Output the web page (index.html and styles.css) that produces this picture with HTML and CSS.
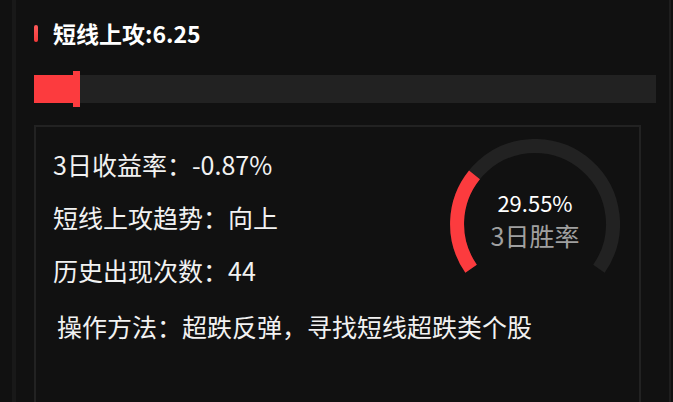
FILE: index.html
```html
<!DOCTYPE html>
<html lang="zh-CN">
<head>
    <meta charset="UTF-8">
    <title>短线上攻</title>
    <link rel="stylesheet" href="styles.css">
</head>
<body>
    <div class="panel">
        <div class="title">
            <span class="marker"></span>
            <span class="title-text">短线上攻:6.25</span>
        </div>
        <div class="bar">
            <div class="bar-fill" style="width: 7.4%;">
                <span class="bar-tick"></span>
            </div>
        </div>
        <div class="card">
            <div class="card-row">
                <div class="stats">
                    <div class="stat">3日收益率：-0.87%</div>
                    <div class="stat">短线上攻趋势：向上</div>
                    <div class="stat">历史出现次数：44</div>
                </div>
                <div class="gauge">
                    <svg width="170" height="170" viewBox="0 0 170 170">
                        <!-- 250 degree arc, gap at the bottom -->
                        <path class="gauge-track" d="M 21.1 129.7 A 78 78 0 1 1 148.9 129.7" />
                        <path class="gauge-value" d="M 21.1 129.7 A 78 78 0 0 1 24.5 35.9" />
                    </svg>
                    <div class="gauge-label">
                        <div class="gauge-num">29.55%</div>
                        <div class="gauge-name">3日胜率</div>
                    </div>
                </div>
            </div>
            <div class="method">操作方法：超跌反弹，寻找短线超跌类个股</div>
        </div>
    </div>
</body>
</html>
```

FILE: styles.css
```css
body {
    margin: 0;
    padding: 0;
    background-color: #111;
    color: #f2f2f2;
    font-family: "Noto Sans CJK SC", "Noto Sans", sans-serif;
    height: 402px;
    overflow: hidden;
}
.panel {
    margin-left: 12px;
    width: 659px;
    height: 402px;
    border-left: 4px solid #191919;
    border-right: 2px solid #1e1e1e;
    padding: 18px 13px 0 18px;
    box-sizing: border-box;
    overflow: hidden;
}
.title {
    display: flex;
    align-items: center;
    height: 30px;
}
.marker {
    width: 4px;
    height: 17px;
    border-radius: 2px;
    background: linear-gradient(#ff5a5a, #f53a3a);
    margin-right: 15px;
}
.title-text {
    font-size: 23px;
    font-weight: bold;
    color: #fff;
}
.bar {
    margin-top: 27px;
    height: 28px;
    background-color: #222;
}
.bar-fill {
    position: relative;
    height: 100%;
    background-color: #fc3b3e;
}
.bar-tick {
    position: absolute;
    right: 0;
    top: -4px;
    width: 7px;
    height: 36px;
    background-color: #fc3b3e;
}
.card {
    margin-top: 22px;
    width: 607px;
    height: 300px;
    border: 2px solid #222;
    box-sizing: border-box;
    padding: 12px 19px 0 17px;
}
.card-row {
    display: flex;
    justify-content: space-between;
}
.stats {
    margin-top: -1px;
}
.stat {
    font-size: 25px;
    line-height: 53px;
}
.gauge {
    position: relative;
    width: 170px;
    height: 170px;
}
.gauge svg {
    display: block;
}
.gauge-track {
    fill: none;
    stroke: #222;
    stroke-width: 14;
}
.gauge-value {
    fill: none;
    stroke: #fc3b3e;
    stroke-width: 14;
}
.gauge-label {
    position: absolute;
    left: 0;
    top: 0;
    width: 100%;
    height: 100%;
    display: flex;
    flex-direction: column;
    align-items: center;
    justify-content: center;
}
.gauge-num {
    font-size: 22px;
    line-height: 30px;
    color: #fff;
    margin-top: -8px;
}
.gauge-name {
    font-size: 25px;
    line-height: 36px;
    color: #a0a0a0;
}
.method {
    font-size: 25px;
    line-height: 53px;
    padding-left: 4px;
    margin-top: -9px;
}
```
